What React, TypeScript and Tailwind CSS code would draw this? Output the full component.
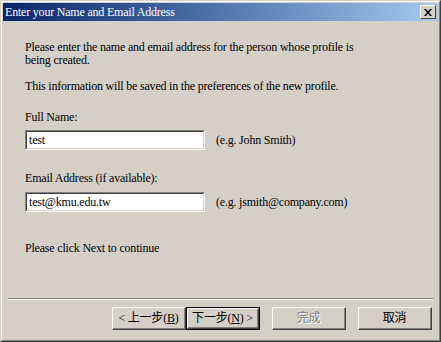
export default function App() {
  const Field = ({ value, hint }: { value: string; hint: string }) => (
    <div className="flex items-center">
      <div className="w-[180px] h-[20px] border-t border-l border-t-[#808080] border-l-[#808080] border-b border-r border-b-white border-r-white">
        <div className="h-full bg-white border-t border-l border-t-[#404040] border-l-[#404040] border-b border-r border-b-[#d4d0c8] border-r-[#d4d0c8] flex items-center px-[2px] text-[12px] leading-none text-black">
          {value}
        </div>
      </div>
      <span className="ml-[11px] text-[12px] leading-[12px]">{hint}</span>
    </div>
  );

  const Button = ({ children, primary, disabled }: { children: React.ReactNode; primary?: boolean; disabled?: boolean }) => (
    <div className={`w-[74px] h-[23px] ${primary ? "border border-black" : ""}`}>
      <div className="h-full border-t border-l border-t-white border-l-white border-b border-r border-b-[#404040] border-r-[#404040]">
        <div
          className={`h-full flex items-center justify-center border-b border-r border-b-[#808080] border-r-[#808080] text-[12px] leading-none font-['Liberation_Serif','Noto_Sans_CJK_TC',serif] ${
            disabled ? "text-[#808080] [text-shadow:1px_1px_0_#ffffff]" : "text-black"
          }`}
        >
          {children}
        </div>
      </div>
    </div>
  );

  return (
    <div className="w-[441px] h-[342px] bg-[#d4d0c8] font-['Liberation_Serif',serif] tracking-[-0.2px] border-t border-l border-t-[#d4d0c8] border-l-[#d4d0c8] border-b border-r border-b-[#404040] border-r-[#404040]">
      <div className="h-full flex flex-col border-t border-l border-t-white border-l-white border-b border-r border-b-[#808080] border-r-[#808080] p-[1px]">
        {/* title bar */}
        <div className="h-[18px] flex items-center justify-between bg-gradient-to-r from-[#0a246a] to-[#a6caf0] pl-[2px] pr-[2px]">
          <span className="text-white text-[12px] leading-none">Enter your Name and Email Address</span>
          <div className="w-[16px] h-[14px] bg-[#d4d0c8] border-t border-l border-t-white border-l-white border-b border-r border-b-[#404040] border-r-[#404040] flex items-center justify-center">
            <svg width="8" height="7" viewBox="0 0 8 7">
              <path d="M0 0h2l2 2.5L6 0h2L5 3.5 8 7H6L4 4.5 2 7H0l3-3.5z" fill="#000" />
            </svg>
          </div>
        </div>

        {/* body */}
        <div className="flex-1 flex flex-col pl-[22px] text-[12px] leading-[12px] text-black">
          <p className="mt-[20px] leading-[13px]">
            Please enter the name and email address for the person whose profile is
            <br />
            being created.
          </p>
          <p className="mt-[13px]">This information will be saved in the preferences of the new profile.</p>
          <p className="mt-[19px]">Full Name:</p>
          <div className="mt-[7px]">
            <Field value="test" hint="(e.g. John Smith)" />
          </div>
          <p className="mt-[22px]">Email Address (if available):</p>
          <div className="mt-[8px]">
            <Field value="test@kmu.edu.tw" hint="(e.g. jsmith@company.com)" />
          </div>
          <p className="mt-[30px]">Please click Next to continue</p>
        </div>

        {/* separator */}
        <div className="mx-[5px] border-t border-t-[#808080] border-b border-b-white" />

        {/* buttons */}
        <div className="flex justify-end items-center pt-[7px] pb-[9px] pr-[6px]">
          <Button>
            &lt; 上一步(<span className="underline">B</span>)
          </Button>
          <Button primary>
            下一步(<span className="underline">N</span>) &gt;
          </Button>
          <div className="w-[12px]" />
          <Button disabled>完成</Button>
          <div className="w-[12px]" />
          <Button>取消</Button>
        </div>
      </div>
    </div>
  );
}
